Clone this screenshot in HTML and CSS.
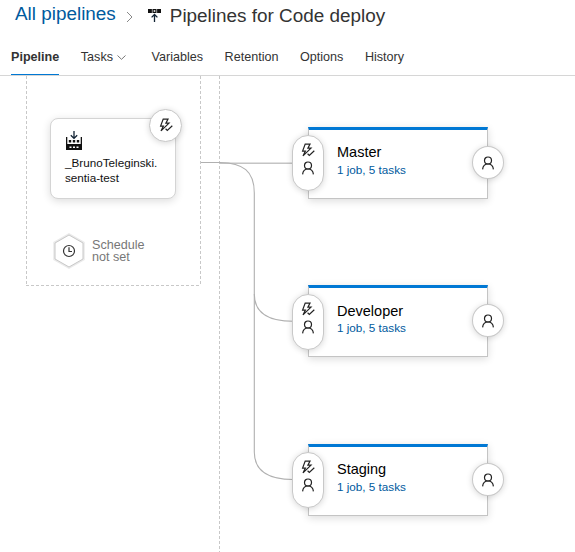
FILE: index.html
```html
<!DOCTYPE html>
<html lang="en">
<head>
<meta charset="utf-8">
<title>Pipelines for Code deploy</title>
<link rel="stylesheet" href="styles.css">
</head>
<body>
<svg class="defs" width="0" height="0" aria-hidden="true">
  <symbol id="bolt" viewBox="0 0 14 14">
    <path d="M4.2 1.1H9L6.9 5.1H10L2 12.9L4.4 8.1H1.6Z"/>
    <path d="M6.6 10.8L8.3 12.4L13.3 7.8"/>
  </symbol>
  <symbol id="person" viewBox="0 0 14 14">
    <circle cx="7" cy="4.5" r="3.5"/>
    <path d="M1.6 13.4C1.9 10.2 4 8 7 8S12.1 10.2 12.4 13.4"/>
  </symbol>
</svg>
<header class="crumbs">
  <a class="crumb-link">All pipelines</a>
  <svg class="crumb-sep" width="8" height="12" viewBox="0 0 8 12"><path d="M1 1L6 6L1 11"/></svg>
  <svg class="crumb-icon" width="13" height="13" viewBox="0 0 13 13">
    <path class="solid" d="M0 0H13V4H0Z"/>
    <path class="gap" d="M4.3 0V4M8.7 0V4"/><path class="hole" d="M5.7 1.2H7.3V2.8H5.7Z"/>
    <path class="arrow" d="M6.5 13V5.5M3.6 8.4L6.5 5.5L9.4 8.4"/>
  </svg>
  <h1 class="title">Pipelines for Code deploy</h1>
</header>
<nav class="tabs">
  <a class="tab active">Pipeline</a>
  <a class="tab">Tasks<svg class="chevron" width="9" height="5" viewBox="0 0 9 5"><path d="M.5 .5L4.5 4.3L8.5 .5"/></svg></a>
  <a class="tab">Variables</a>
  <a class="tab">Retention</a>
  <a class="tab">Options</a>
  <a class="tab">History</a>
</nav>
<main class="canvas">
  <svg class="edges" width="575" height="476" viewBox="0 0 575 476">
    <path class="dash" d="M26.5 0V210M200.5 0V210M26 209.5H201M219.5 0V476"/>
    <path class="edge light" d="M220 87.2H293"/>
    <path class="edge" d="M201 86.5H220C243 87 254.3 95 254.3 117V218C254.3 236 266 245.3 293 245.3"/>
    <path class="edge" d="M254.3 218V376C254.3 394 266 403.5 293 403.5"/>
  </svg>

  <section class="artifact">
    <svg class="build" width="18" height="20" viewBox="0 0 18 20">
      <path class="arrow" d="M9 0V7M5.8 4.2L9 7.4L12.2 4.2"/>
      <path class="solid" d="M1 6H2.3V13H15.7V6H17V19H1Z"/>
      <path class="solid" d="M3.8 9H6.2V11.5H3.8ZM7.8 9H10.2V11.5H7.8ZM11.8 9H14.2V11.5H11.8Z"/>
      <path class="hole" d="M4.5 15.4H6.5V17H4.5ZM8 15.4H10V17H8ZM11.5 15.4H13.5V17H11.5Z"/>
    </svg>
    <div class="artifact-name">_BrunoTeleginski.<br>sentia-test</div>
    <span class="badge trigger"><svg class="icon"><use href="#bolt"/></svg></span>
  </section>

  <section class="schedule">
    <svg class="hex" width="32" height="36" viewBox="0 0 32 36">
      <path class="halo" d="M16 2L30 10V26L16 34L2 26V10Z"/>
      <path class="shape" d="M16 2L30 10V26L16 34L2 26V10Z"/>
      <circle class="clock" cx="16" cy="18" r="5.5"/><path class="clock" d="M16 14.3V18.5H19"/>
    </svg>
    <div>Schedule<br>not set</div>
  </section>

  <section class="stage master">
    <span class="pill"><svg class="icon"><use href="#bolt"/></svg><svg class="icon"><use href="#person"/></svg></span>
    <h2 class="stage-name">Master</h2><a class="stage-jobs">1 job, 5 tasks</a>
    <span class="badge approve"><svg class="icon"><use href="#person"/></svg></span>
  </section>
  <section class="stage developer">
    <span class="pill"><svg class="icon"><use href="#bolt"/></svg><svg class="icon"><use href="#person"/></svg></span>
    <h2 class="stage-name">Developer</h2><a class="stage-jobs">1 job, 5 tasks</a>
    <span class="badge approve"><svg class="icon"><use href="#person"/></svg></span>
  </section>
  <section class="stage staging">
    <span class="pill"><svg class="icon"><use href="#bolt"/></svg><svg class="icon"><use href="#person"/></svg></span>
    <h2 class="stage-name">Staging</h2><a class="stage-jobs">1 job, 5 tasks</a>
    <span class="badge approve"><svg class="icon"><use href="#person"/></svg></span>
  </section>
</main>
</body>
</html>
```
FILE: styles.css
```css
* { box-sizing: border-box; }
body {
  margin: 0;
  height: 552px;
  overflow: hidden;
  background: #fff;
  color: #333;
  font-family: "Liberation Sans", Arial, sans-serif;
}
svg { display: block; fill: none; flex: none; }
.defs { position: absolute; }
.solid { fill: #111; }
.hole { fill: #fff; }
.gap { stroke: #fff; stroke-width: .6; }
.arrow { stroke: #123; stroke-width: 1.3; }

.crumbs { display: flex; align-items: flex-start; height: 38px; padding-left: 15px; }
.crumb-link { margin-top: 3px; font-size: 18.9px; line-height: 22px; color: #005a9e; }
.crumb-sep { margin: 11px 0 0 10px; stroke: #888; stroke-width: 1; }
.crumb-icon { margin: 9px 0 0 14px; }
.title { margin: 5px 0 0 9px; font-size: 18.9px; line-height: 22px; font-weight: 400; }

.tabs {
  display: flex;
  gap: 21.5px;
  height: 38px;
  padding-left: 11px;
  border-bottom: 1px solid #d6d6d6;
  font-size: 12.6px;
  line-height: 37px;
}
.tab { display: flex; align-items: center; height: 37px; padding-top: 1px; }
.tab.active { font-weight: 700; border-bottom: 1px solid #0078d4; padding-top: 2px; }
.chevron { margin-left: 4px; stroke: #777; stroke-width: 1; }
.tab:nth-child(2) { margin-right: 4px; }

.canvas { position: relative; height: 476px; }
.edges { position: absolute; left: 0; top: 0; }
.dash { stroke: #c8c8c8; stroke-width: 1; stroke-dasharray: 3 2; }
.edge { stroke: #b0b0b0; stroke-width: 1.1; }
.edge.light { stroke: #c4c4c4; stroke-width: 1.4; }

.artifact {
  position: absolute;
  left: 50px;
  top: 42px;
  width: 126px;
  height: 81px;
  padding: 12px 0 0 14px;
  border: 1px solid #d4d4d4;
  border-radius: 8px;
  background: #fff;
  box-shadow: 0 2px 8px rgba(0, 0, 0, .14);
}
.artifact-name { margin-top: 4px; font-size: 11.7px; line-height: 15px; color: #111; white-space: nowrap; }

.badge {
  position: absolute;
  display: flex;
  align-items: center;
  justify-content: center;
  width: 32px;
  height: 33px;
  border: 1px solid #c8c8c8;
  border-radius: 50%;
  background: #fff;
  box-shadow: 0 1px 6px rgba(0, 0, 0, .16);
}
.trigger { left: 98px; top: -10px; width: 33px; }
.trigger .icon { margin-top: -2px; }
.approve { left: 163px; top: 16px; }
.icon { width: 14px; height: 14px; stroke: #222; stroke-width: 1.2; }

.schedule {
  position: absolute;
  left: 53px;
  top: 157px;
  display: flex;
  align-items: center;
  gap: 7px;
  font-size: 12.6px;
  line-height: 12px;
  color: #777;
}
.halo { stroke: #eaeaea; stroke-width: 3.5; }
.shape { fill: #fff; stroke: #c8c8c8; stroke-width: 1; }
.clock { stroke: #333; stroke-width: 1.2; }

.stage {
  position: absolute;
  left: 308px;
  width: 180px;
  height: 72px;
  padding: 13px 0 0 28px;
  border: 1px solid #c4c4c4;
  border-top: 3px solid #0078d4;
  background: #fff;
  box-shadow: 0 2px 8px rgba(0, 0, 0, .14);
}
.master { top: 51px; }
.developer { top: 209px; }
.staging { top: 368px; }
.stage-name { margin: 0; font-size: 14.5px; line-height: 18px; font-weight: 400; color: #000; }
.stage-jobs { display: block; margin-top: 1px; font-size: 11.7px; line-height: 15px; color: #005a9e; }
.developer .stage-name { padding-top: 1px; }
.developer .stage-jobs { margin-top: 0; }
.pill {
  position: absolute;
  left: -17px;
  top: 5px;
  display: flex;
  flex-direction: column;
  align-items: center;
  padding-top: 7px;
  gap: 4px;
  width: 32px;
  height: 56px;
  border: 1px solid #c8c8c8;
  border-radius: 16px;
  background: #fff;
  box-shadow: 0 1px 6px rgba(0, 0, 0, .16);
}
.developer .pill { top: 6px; }
```
